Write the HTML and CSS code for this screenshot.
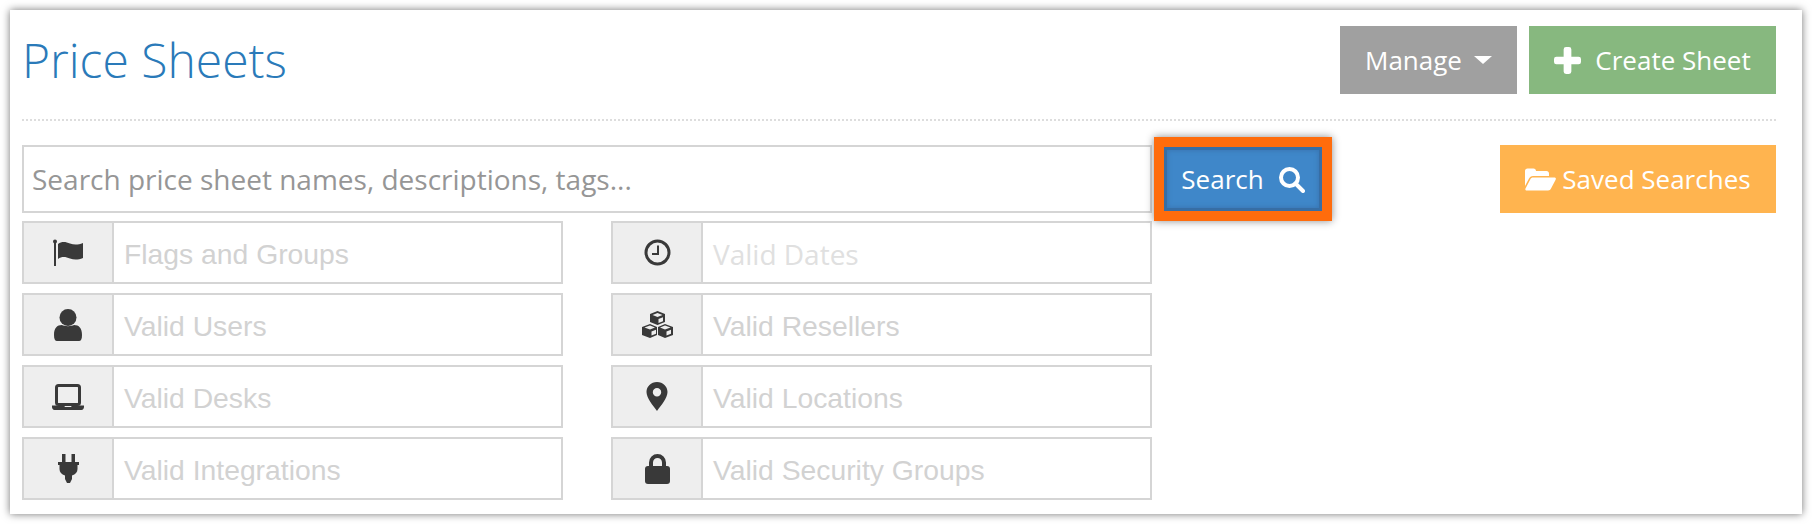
FILE: index.html
```html
<!DOCTYPE html>
<html lang="en">
<head>
  <meta charset="UTF-8">
  <title>Price Sheets</title>
  <link rel="stylesheet" href="styles.css">
</head>
<body>
  <div class="panel">
    <div class="header">
      <h1>Price Sheets</h1>
      <div class="header-actions">
        <button class="btn btn-manage">Manage <span class="caret"></span></button>
        <button class="btn btn-create">
          <svg class="icon-plus" viewBox="0 0 28 28"><path d="M10 2.500A2.500 2.500 0 0 1 12.500 0h3A2.500 2.500 0 0 1 18 2.500V10h7.500a2.500 2.500 0 0 1 2.500 2.500v3a2.500 2.500 0 0 1-2.500 2.500H18v7.500a2.500 2.500 0 0 1-2.500 2.500h-3a2.500 2.500 0 0 1-2.500-2.500V18H2.500A2.500 2.500 0 0 1 0 15.500v-3A2.500 2.500 0 0 1 2.500 10H10z"/></svg>
          Create Sheet
        </button>
      </div>
    </div>

    <div class="search-area">
      <div class="search-main">
        <div class="search-row">
          <input class="search-input" type="text" placeholder="Search price sheet names, descriptions, tags...">
          <div class="search-highlight">
            <button class="btn btn-search">Search
              <svg class="icon-search" viewBox="0 0 27 27"><circle cx="11.500" cy="11.500" r="8.500"/><path d="M17.500 17.500L25 25" stroke-linecap="round"/></svg>
            </button>
          </div>
        </div>

        <div class="filters">
          <div class="filter">
            <span class="filter-icon">
              <svg viewBox="0 0 31 27" width="31" height="27"><path d="M2 3v24" class="stroke"/><circle cx="2" cy="2.500" r="2"/><path d="M5 5c4-3 8-2 12-.500s8 1.500 13-.500v15c-5 2-9 2-13 .500s-8-2.500-12 .500z"/></svg>
            </span>
            <span class="filter-text">Flags and Groups</span>
          </div>
          <div class="filter">
            <span class="filter-icon">
              <svg viewBox="0 0 27 27" width="27" height="27"><circle cx="13.500" cy="13.500" r="11.500" class="stroke ring"/><path d="M14 6.500V15H8" class="stroke"/></svg>
            </span>
            <span class="filter-text alt">Valid Dates</span>
          </div>
          <div class="filter">
            <span class="filter-icon">
              <svg viewBox="0 0 28 32" width="28" height="32"><circle cx="14" cy="8.500" r="8.500"/><path d="M0 26c0-7 3-10 8-10 2 1.500 10 1.500 12 0 5 0 8 3 8 10 0 4-1 6-3 6H3c-2 0-3-2-3-6z"/></svg>
            </span>
            <span class="filter-text">Valid Users</span>
          </div>
          <div class="filter">
            <span class="filter-icon">
              <svg viewBox="0 0 31 27" width="31" height="27"><path d="M15.500 0l7.500 3v8l-7.500 3L8 11V3zM8 13l7 3v8l-7 3-8-3v-8zM23 13l8 3v8l-8 3-7-3v-8z"/><path d="M10.500 4l5 2 5-2-5-2zM2.500 16.500l5.500 2 5-2-5-2zM18 16.500l5 2 5.500-2-5.500-2zM16.500 8v4l4.500-1.800v-4zM9.500 20.500v4l4.500-1.800v-4zM24.500 20.500v4l4.500-1.800v-4z" class="face"/></svg>
            </span>
            <span class="filter-text">Valid Resellers</span>
          </div>
          <div class="filter">
            <span class="filter-icon">
              <svg viewBox="0 0 32 26" width="32" height="26"><rect x="4.500" y="1.500" width="23" height="19" rx="2" class="stroke ring"/><path d="M0 21.500h12l1 1.500h6l1-1.500h12v1.500c0 1.500-1 3-2.500 3h-27C1 26 0 24.500 0 23z"/></svg>
            </span>
            <span class="filter-text">Valid Desks</span>
          </div>
          <div class="filter">
            <span class="filter-icon">
              <svg viewBox="0 0 22 29" width="22" height="29"><path fill-rule="evenodd" d="M11 0c6 0 10.500 4.500 10.500 10 0 6-6.500 13.500-10.500 19C7 23.500.500 16 .500 10 .500 4.500 5 0 11 0zm0 6a4.200 4.200 0 1 0 0 8.400A4.200 4.200 0 0 0 11 6z"/></svg>
            </span>
            <span class="filter-text">Valid Locations</span>
          </div>
          <div class="filter">
            <span class="filter-icon">
              <svg viewBox="0 0 21 29" width="21" height="29"><path d="M4 0h3.500v8H4zM13.500 0H17v8h-3.500zM0 8h21v3h-1.500v4c0 3-2 5.500-5.500 6.500V25l-2 4H9l-2-4v-3.500C3.500 20.500 1.500 18 1.500 15v-4H0z"/></svg>
            </span>
            <span class="filter-text">Valid Integrations</span>
          </div>
          <div class="filter">
            <span class="filter-icon">
              <svg viewBox="0 0 25 30" width="25" height="30"><path d="M6 13V8.500a6.500 6.500 0 0 1 13 0V13" class="stroke lock"/><rect y="12" width="25" height="18" rx="3"/></svg>
            </span>
            <span class="filter-text">Valid Security Groups</span>
          </div>
        </div>
      </div>

      <button class="btn btn-saved">
        <svg class="icon-folder" viewBox="0 0 31 23"><path d="M0 18V3c0-1.500 1-2.500 2.500-2.500h6C10 .5 11 1.500 11 3h10.500C23 3 24 4 24 5.500V8H8c-2 0-3 1-4 2.500z"/><path d="M8 9.500h21c1.500 0 2.500 1 1.500 2.500L26 20.500c-.5 1-1.500 2-3 2H2c-1.500 0-2-1-1.500-2L5.500 11c.5-1 1.500-1.500 2.500-1.500z"/></svg>
        Saved Searches
      </button>
    </div>
  </div>
</body>
</html>
```

FILE: styles.css
```css
* {
  box-sizing: border-box;
}

body {
  margin: 0;
  padding: 10px;
  height: 524px;
  background-color: #fff;
  font-family: "Open Sans", sans-serif;
  overflow: hidden;
}

.panel {
  width: 1792px;
  height: 504px;
  padding: 0 26px 0 12px;
  background-color: #fff;
  box-shadow: 0 0 8px rgba(0, 0, 0, 0.55);
}

.header {
  display: flex;
  justify-content: space-between;
  align-items: flex-start;
  height: 111px;
  padding-top: 16px;
  border-bottom: 2px dotted #ddd;
}

h1 {
  margin: 0;
  padding-top: 3px;
  font-size: 48px;
  line-height: 61px;
  font-weight: 300;
  color: #2a7ab9;
}

.header-actions {
  display: flex;
  gap: 12px;
}

.btn {
  display: inline-flex;
  align-items: center;
  justify-content: center;
  height: 68px;
  border: none;
  font-family: "Open Sans", sans-serif;
  font-size: 26px;
  color: #fff;
}

.btn-manage {
  width: 177px;
  gap: 12px;
  background-color: #a0a0a0;
}

.caret {
  width: 0;
  height: 0;
  border-left: 9px solid transparent;
  border-right: 9px solid transparent;
  border-top: 8px solid #fff;
}

.btn-create {
  width: 247px;
  gap: 14px;
  background-color: #87b87f;
}

.icon-plus {
  width: 27px;
  height: 27px;
  fill: #fff;
}

.search-area {
  display: flex;
  justify-content: space-between;
  padding-top: 24px;
}

.search-main {
  width: 1130px;
}

.search-row {
  display: flex;
  height: 68px;
}

.search-input {
  width: 1130px;
  height: 68px;
  flex-shrink: 0;
  padding: 0 8px;
  border: 2px solid #d5d5d5;
  outline: none;
  font-family: "Open Sans", sans-serif;
  font-size: 28px;
}

.search-input::placeholder {
  color: #969696;
  opacity: 1;
}

.search-highlight {
  flex-shrink: 0;
  height: 84px;
  margin: -8px 0 0 2px;
  padding: 10px;
  background-color: #ff6c0c;
  box-shadow: 0 0 8px rgba(0, 0, 0, 0.45);
  position: relative;
}

.btn-search {
  width: 158px;
  height: 64px;
  gap: 14px;
  background-color: #3f87c9;
  box-shadow: inset 0 0 0 3px #376ea5, inset 0 0 4px 4px #3a78b5;
}

.icon-search {
  width: 27px;
  height: 27px;
  fill: none;
  stroke: #fff;
  stroke-width: 4;
}

.filters {
  display: grid;
  grid-template-columns: 541px 541px;
  justify-content: space-between;
  row-gap: 9px;
  margin-top: 8px;
}

.filter {
  display: flex;
  height: 63px;
  border: 2px solid #d5d5d5;
}

.filter-icon {
  display: flex;
  align-items: center;
  justify-content: center;
  width: 90px;
  flex-shrink: 0;
  background-color: #eee;
  border-right: 2px solid #d5d5d5;
}

.filter-icon svg {
  fill: #393939;
}

.filter-icon .stroke {
  fill: none;
  stroke: #393939;
  stroke-width: 2;
}

.filter-icon .ring {
  stroke-width: 3;
}

.filter-icon .face {
  fill: #eee;
}

.filter-icon .lock {
  stroke-width: 4;
}

.filter-text {
  align-self: center;
  padding: 4px 0 0 10px;
  font-family: "Liberation Sans", Arial, sans-serif;
  font-size: 28.300px;
  color: #d2d2d2;
}

.filter-text.alt {
  padding-top: 2px;
  font-family: "Open Sans", sans-serif;
  font-size: 28px;
  color: #e0e0e0;
}

.btn-saved {
  width: 276px;
  gap: 6px;
  background-color: #ffb44f;
}

.icon-folder {
  width: 31px;
  height: 23px;
  fill: #fff;
}
```
